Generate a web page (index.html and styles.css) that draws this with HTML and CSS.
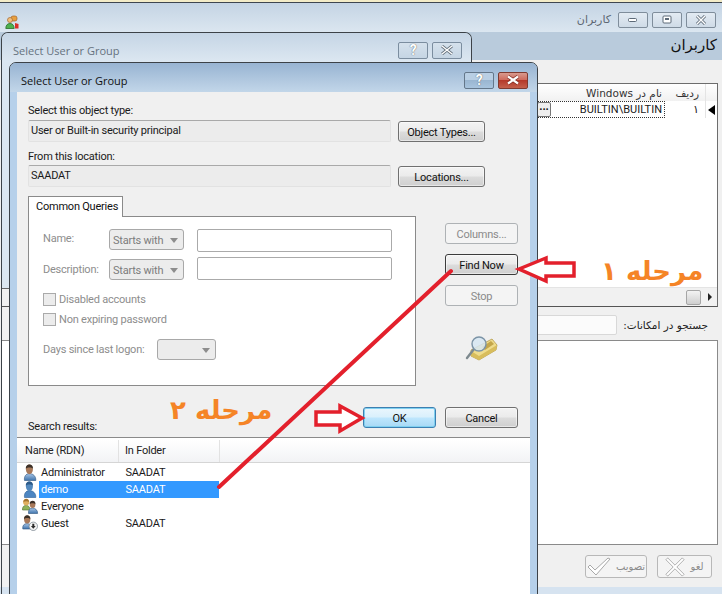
FILE: index.html
```html
<!DOCTYPE html>
<html lang="en">
<head>
    <meta charset="UTF-8">
    <meta name="viewport" content="width=device-width, initial-scale=1.0">
    <title>Select User or Group</title>
    <link rel="stylesheet" href="styles.css">
</head>
<body>
    <svg class="defs" width="0" height="0">
        <defs>
            <linearGradient id="body-blue" x1="0" y1="0" x2="0" y2="1">
                <stop offset="0" stop-color="#a9c6e6"/>
                <stop offset="1" stop-color="#3f74ad"/>
            </linearGradient>
            <symbol id="user" viewBox="0 0 16 17">
                <path d="M2.500 16.500c-.6-3.800 1.200-6.900 5-6.900s6.600 2.900 6.300 6.900z" fill="url(#body-blue)" stroke="#2f5580" stroke-width=".6"/>
                <ellipse cx="7.400" cy="5.400" rx="3.500" ry="4.800" fill="#a8795a"/>
                <path d="M3.800 4.800C3.700 1.500 5.500.4 7.500.4s3.600 1.200 3.500 4.400C9.600 3 5.300 3 3.800 4.800z" fill="#3c3028"/>
            </symbol>
            <symbol id="user-blue" viewBox="0 0 16 17">
                <path d="M2.500 16.500c-.6-3.800 1.200-6.900 5-6.900s6.600 2.900 6.300 6.900z" fill="#4d86c2" stroke="#2f5f94" stroke-width=".6"/>
                <ellipse cx="7.400" cy="5.400" rx="3.500" ry="4.800" fill="#5288bd"/>
                <path d="M3.800 4.800C3.700 1.500 5.500.4 7.500.4s3.600 1.200 3.500 4.400C9.600 3 5.300 3 3.800 4.800z" fill="#2d5a88"/>
            </symbol>
            <symbol id="users" viewBox="0 0 17 16">
                <path d="M.5 12c-.3-2.800 1-4.600 3.600-4.600S8 9.200 7.800 12z" fill="#8fb35a" stroke="#4d6b2a" stroke-width=".6"/>
                <circle cx="4.200" cy="4.300" r="3.100" fill="#e0b060"/>
                <path d="M1.300 4C1.500 1.700 2.800.7 4.300.7S7 1.800 7.100 4C5.600 2.900 3 2.900 1.300 4z" fill="#a5742f"/>
                <path d="M6.500 15.500c-.4-3.200 1.100-5.400 4-5.400s5.300 2.200 5.100 5.400z" fill="url(#body-blue)" stroke="#2f5580" stroke-width=".6"/>
                <ellipse cx="10.600" cy="6.600" rx="2.800" ry="3.500" fill="#a8795a"/>
                <path d="M7.700 6.200C7.600 3.700 9 2.800 10.600 2.800s2.900 1 2.800 3.400C12.300 4.900 8.900 4.900 7.700 6.200z" fill="#3c3028"/>
            </symbol>
            <symbol id="user-down" viewBox="0 0 16 16">
                <path d="M.8 14c-.5-3.200 1-5.400 4.200-5.400S10 10.800 9.800 14z" fill="url(#body-blue)" stroke="#2f5580" stroke-width=".6"/>
                <ellipse cx="5.200" cy="4.600" rx="3.100" ry="4" fill="#a8795a"/>
                <path d="M2 4.200C1.900 1.400 3.400.3 5.200.3s3.300 1.100 3.200 3.900C7 2.700 3.400 2.700 2 4.200z" fill="#3c3028"/>
                <circle cx="11.300" cy="11.300" r="4.200" fill="#f4f4f4" stroke="#6f7b86" stroke-width=".7"/>
                <path d="M10.300 8.700h2v2.300h1.400l-2.400 2.800-2.400-2.800h1.400z" fill="#2b2b2b"/>
            </symbol>
        </defs>
    </svg>

    <div class="stage">
        <!-- main window behind the dialogs -->
        <div class="app">
            <div class="app-top">
                <svg class="app-icon" width="15" height="15" viewBox="0 0 15 15">
                    <rect x="6" y="1" width="6" height="5" rx="2" fill="#e8a040" stroke="#a5652a" stroke-width=".7"/>
                    <circle cx="5" cy="5" r="2.500" fill="#f0c080" stroke="#a5652a" stroke-width=".7"/>
                    <path d="M.8 13.500c0-3.200 1.600-5 4.200-5s4 1.800 4.200 5z" fill="#4fb04f" stroke="#2a6f2a" stroke-width=".8"/>
                    <path d="M10 8l3.500 1v4.500H10z" fill="#d8302a"/>
                </svg>
                <div class="app-controls">
                    <span class="app-name">کاربران</span>
                    <span class="win-btn"><svg width="10" height="6" viewBox="0 0 10 6"><rect x=".5" y="1.500" width="8" height="3" rx="1" fill="#fff" stroke="#5d6a78"/></svg></span>
                    <span class="win-btn"><svg width="10" height="9" viewBox="0 0 10 9"><rect x="1" y="1" width="8" height="7" rx="1" fill="#fff" stroke="#5d6a78"/><rect x="3" y="3" width="4" height="2" fill="#5d6a78"/></svg></span>
                    <span class="win-btn"><svg width="12" height="10" viewBox="0 0 12 10"><path d="M2 1l8 8M10 1L2 9" stroke="#5d6a78" stroke-width="3"/><path d="M2 1l8 8M10 1L2 9" stroke="#fff" stroke-width="1.400"/></svg></span>
                </div>
            </div>
            <div class="app-head">کاربران</div>
            <div class="app-body">
                <div class="grid-box">
                    <div class="grid-head">
                        <span class="col-fill"></span>
                        <span class="col-name" dir="rtl">نام در Windows</span>
                        <span class="col-idx">ردیف</span>
                        <span class="col-mark"></span>
                    </div>
                    <div class="grid-row">
                        <span class="col-fill"></span>
                        <span class="col-name cell-edit"><b class="dots">•••</b>BUILTIN\BUILTIN</span>
                        <span class="col-idx">۱</span>
                        <span class="col-mark"><i class="row-arrow"></i></span>
                    </div>
                    <div class="grid-space"></div>
                    <div class="hscroll">
                        <span class="thumb"></span>
                        <i class="scroll-arrow"></i>
                    </div>
                </div>
                <div class="search-row">
                    <span class="search-input"></span>
                    <label>جستجو در امکانات:</label>
                </div>
                <div class="text-box"></div>
                <div class="app-actions">
                    <span class="act-btn">
                        <svg width="24" height="19" viewBox="0 0 24 19"><path d="M1 10l2-2 5 5L21 1l2 1L9 18z" fill="#fff" stroke="#a9a9a9"/></svg>
                        تصویب
                    </span>
                    <span class="act-btn act-cancel">
                        <svg width="20" height="20" viewBox="0 0 22 22"><path d="M3 1l8 8 8-8 2 2-8 8 8 8-2 2-8-8-8 8-2-2 8-8-8-8z" fill="#fff" stroke="#a9a9a9"/></svg>
                        لغو
                    </span>
                </div>
            </div>
            <div class="app-foot"></div>
        </div>

        <!-- dialog behind, lost focus -->
        <div class="window window-back">
            <div class="title-bar">
                <span class="title-text">Select User or Group</span>
                <span class="cap-btn cap-pale">?</span>
                <span class="cap-btn cap-pale"><svg width="14" height="10" viewBox="0 0 14 10"><path d="M2 1l10 8M12 1L2 9" stroke="#66727e" stroke-width="3"/><path d="M2 1l10 8M12 1L2 9" stroke="#fff" stroke-width="1.300"/></svg></span>
            </div>
        </div>

        <!-- dialog in front -->
        <div class="window window-front">
            <div class="title-bar">
                <span class="title-text">Select User or Group</span>
                <span class="cap-btn">?</span>
                <span class="cap-btn cap-close"><svg width="16" height="10" viewBox="0 0 16 10"><path d="M3 1.500l10 7M13 1.500l-10 7" stroke="#7d2a20" stroke-width="3.600"/><path d="M3 1.500l10 7M13 1.500l-10 7" stroke="#fff" stroke-width="2.200"/></svg></span>
            </div>
            <div class="dialog-body">
                <div class="form-area">
                    <div class="field-label">Select this object type:</div>
                    <div class="field-row">
                        <div class="read-field">User or Built-in security principal</div>
                        <button class="btn" type="button">Object Types...</button>
                    </div>
                    <div class="field-label field-label-2">From this location:</div>
                    <div class="field-row">
                        <div class="read-field">SAADAT</div>
                        <button class="btn" type="button">Locations...</button>
                    </div>

                    <div class="query-area">
                        <div class="query-left">
                            <div class="tab">Common Queries</div>
                            <div class="tab-panel">
                                <div class="query-row">
                                    <span class="query-label">Name:</span>
                                    <span class="combo">Starts with<i class="combo-arrow"></i></span>
                                    <span class="text-input"></span>
                                </div>
                                <div class="query-row query-row-2">
                                    <span class="query-label">Description:</span>
                                    <span class="combo">Starts with<i class="combo-arrow"></i></span>
                                    <span class="text-input"></span>
                                </div>
                                <div class="check-row check-first"><i class="check"></i>Disabled accounts</div>
                                <div class="check-row"><i class="check"></i>Non expiring password</div>
                                <div class="days-row">
                                    <span class="days-label">Days since last logon:</span>
                                    <span class="combo combo-small"><i class="combo-arrow"></i></span>
                                </div>
                            </div>
                        </div>
                        <div class="query-side">
                            <button class="btn btn-off" type="button">Columns...</button>
                            <button class="btn btn-find" type="button">Find Now</button>
                            <button class="btn btn-off" type="button">Stop</button>
                            <svg class="find-icon" width="33" height="25" viewBox="0 0 33 25">
                                <path d="M6 14L27 3l5 6-1 5-17 10-8-4z" fill="#efdc8c" stroke="#b49a4a" stroke-width=".8"/>
                                <path d="M6 15l8 5 18-11-1 5-17 10-8-4z" fill="#d8bd5c"/>
                                <path d="M17 11l9-6 3 3-9 6z" fill="#c4a64a"/>
                                <path d="M9 13L2 22" stroke="#7e8a8f" stroke-width="2.400" stroke-linecap="round"/>
                                <circle cx="14" cy="8" r="7" fill="#d6e6f2" fill-opacity=".85" stroke="#7b93a6" stroke-width="1.400"/>
                            </svg>
                        </div>
                    </div>

                    <div class="result-bar">
                        <span class="field-label">Search results:</span>
                        <div class="result-btns">
                            <button class="btn btn-ok" type="button">OK</button>
                            <button class="btn" type="button">Cancel</button>
                        </div>
                    </div>
                </div>

                <div class="list">
                    <div class="list-head">
                        <span class="list-col1">Name (RDN)</span>
                        <span class="list-col2">In Folder</span>
                    </div>
                    <div class="list-row">
                        <svg class="list-icon" width="16" height="17"><use href="#user"/></svg>
                        <span class="list-col1">Administrator</span>
                        <span class="list-col2">SAADAT</span>
                    </div>
                    <div class="list-row list-row-on">
                        <svg class="list-icon" width="16" height="17"><use href="#user-blue"/></svg>
                        <span class="list-col1">demo</span>
                        <span class="list-col2">SAADAT</span>
                    </div>
                    <div class="list-row">
                        <svg class="list-icon" width="17" height="16"><use href="#users"/></svg>
                        <span class="list-col1">Everyone</span>
                        <span class="list-col2"></span>
                    </div>
                    <div class="list-row">
                        <svg class="list-icon" width="16" height="16"><use href="#user-down"/></svg>
                        <span class="list-col1">Guest</span>
                        <span class="list-col2">SAADAT</span>
                    </div>
                </div>
            </div>
        </div>

        <!-- annotations drawn on top of the screenshot -->
        <svg class="marks" width="722" height="594" viewBox="0 0 722 594">
            <path d="M219 487L451 271" fill="none" stroke="#e3202c" stroke-width="4" stroke-linecap="round"/>
            <path d="M519 269L546 258V263H574V276H546V281z" fill="#fff" stroke="#e3202c" stroke-width="3.500"/>
            <path d="M362 418L340 406V412H316V425H340V431z" fill="#fff" stroke="#e3202c" stroke-width="3.500"/>
        </svg>
        <div class="step step-1">مرحله ۱</div>
        <div class="step step-2">مرحله ۲</div>
    </div>
</body>
</html>
```

FILE: styles.css
```css
html, body {
    margin: 0;
    padding: 0;
    overflow: hidden;
}

body {
    font-family: Roboto, "Liberation Sans", sans-serif;
    font-size: 11px;
    letter-spacing: -0.22px;
    color: #1a1a1a;
}

.defs {
    position: absolute;
}

.stage {
    position: relative;
    width: 722px;
    height: 594px;
    overflow: hidden;
    background: #f0f0f0;
}

/* main window */
.app {
    width: 722px;
    height: 594px;
    display: flex;
    flex-direction: column;
    border-top: 3px solid #3e4650;
    box-sizing: border-box;
    position: relative;
}

.app::before {
    content: "";
    position: absolute;
    left: 0;
    right: 0;
    top: -3px;
    height: 2px;
    background: #f3ecc8;
}

.app-top {
    height: 29px;
    display: flex;
    align-items: center;
    justify-content: space-between;
    padding: 0 6px 0 5px;
    background: linear-gradient(#c4d4e4, #dbe6f0);
}

.app-icon {
    margin-top: 10px;
}

.app-controls {
    display: flex;
    align-items: center;
    gap: 4px;
    margin-top: 4px;
}

.app-name {
    font-family: "DejaVu Sans", sans-serif;
    font-size: 11px;
    letter-spacing: 0;
    color: #5c6672;
    margin-right: 3px;
}

.win-btn {
    width: 30px;
    height: 16px;
    box-sizing: border-box;
    border: 1px solid #7f8d9b;
    border-radius: 2px;
    background: linear-gradient(#e3ebf3, #cfdbe7);
    display: flex;
    align-items: center;
    justify-content: center;
}

.app-head {
    height: 28px;
    background: #b9cbdc;
    direction: rtl;
    font-family: "DejaVu Sans", sans-serif;
    font-size: 15px;
    letter-spacing: 0;
    line-height: 26px;
    padding-right: 5px;
    color: #111;
}

.app-body {
    height: 527px;
    flex: 1;
    display: flex;
    flex-direction: column;
    padding: 23px 4px 0 1px;
    background: #f0f0f0;
}

.grid-box {
    height: 224px;
    border: 1px solid #6d6d6d;
    border-bottom-color: #555;
    background: #fff;
    display: flex;
    flex-direction: column;
    box-sizing: border-box;
}

.grid-head,
.grid-row {
    display: flex;
    height: 17px;
    font-family: "DejaVu Sans", sans-serif;
    font-size: 10.500px;
    letter-spacing: 0;
    line-height: 17px;
}

.grid-head {
    background: linear-gradient(#fff, #f1f1f1);
    color: #333;
    line-height: 19px;
}

.grid-row {
    font-family: Roboto, sans-serif;
    font-size: 11px;
}

.col-fill {
    flex: 1;
}

.col-name {
    width: 135px;
    box-sizing: border-box;
    text-align: right;
    padding-right: 3px;
    border-right: 1px solid #e4e4e4;
    position: relative;
}

.col-name[dir="rtl"] {
    padding-right: 3px;
    border-right: 0;
    border-left: 1px solid #e4e4e4;
}

.col-idx {
    width: 41px;
    box-sizing: border-box;
    text-align: right;
    padding-right: 6px;
    border-right: 1px solid #e4e4e4;
}

.col-mark {
    width: 11px;
    display: flex;
    align-items: center;
    justify-content: center;
}

.cell-edit {
    border: 1px dotted #333;
    line-height: 15px;
    padding-right: 2px;
}

.dots {
    position: absolute;
    left: 6px;
    top: 0;
    width: 14px;
    height: 15px;
    border: 1px solid #777;
    border-radius: 2px;
    box-sizing: border-box;
    background: #eee;
    font-family: "DejaVu Sans", sans-serif;
    font-size: 5px;
    line-height: 12px;
    text-align: center;
    font-weight: bold;
    letter-spacing: 0;
    color: #111;
}

.row-arrow {
    border: 5px solid transparent;
    border-right: 7px solid #000;
    border-left: 0;
}

.grid-space {
    flex: 1;
}

.hscroll {
    height: 18px;
    background: #f1f1f1;
    border-top: 1px solid #e4e4e4;
    display: flex;
    align-items: center;
    justify-content: flex-end;
    padding-right: 5px;
    gap: 7px;
}

.thumb {
    width: 13px;
    height: 13px;
    border: 1px solid #a6a6a6;
    border-radius: 2px;
    background: linear-gradient(#f3f3f3, #cfcfcf);
}

.scroll-arrow {
    border: 4px solid transparent;
    border-left: 4px solid #222;
    border-right: 0;
}

.search-row {
    height: 33px;
    display: flex;
    justify-content: flex-end;
    align-items: center;
}

.search-input {
    width: 128px;
    height: 18px;
    background: #fbfbfb;
    border: 1px solid #d8d8d8;
    margin-right: 5px;
    margin-top: 2px;
    border-radius: 2px;
}

.search-row label {
    font-family: "DejaVu Sans", sans-serif;
    font-size: 10.500px;
    letter-spacing: 0;
    width: 96px;
    direction: rtl;
    padding: 2px 10px 0 0;
    box-sizing: border-box;
    white-space: nowrap;
    color: #222;
}

.text-box {
    height: 205px;
    border: 1px solid #8a8a8a;
    background: #fff;
    box-sizing: border-box;
}

.app-actions {
    display: flex;
    justify-content: flex-end;
    gap: 10px;
    padding: 10px 6px 0 0;
}

.act-btn {
    width: 62px;
    height: 23px;
    border: 1px solid #b8b8b8;
    border-radius: 3px;
    box-sizing: border-box;
    display: flex;
    align-items: center;
    justify-content: center;
    gap: 5px;
    font-family: "DejaVu Sans", sans-serif;
    font-size: 10px;
    letter-spacing: 0;
    color: #8b8b8b;
    background: #f4f4f4;
}

.act-cancel {
    width: 55px;
}

.app-foot {
    height: 7px;
    background: #d6e3f0;
}

/* dialog windows */
.window {
    position: absolute;
    box-sizing: border-box;
    border: 1px solid #3c4248;
    border-radius: 7px 7px 0 0;
}

.window-back {
    left: 1px;
    top: 32px;
    width: 471px;
    height: 600px;
    border-bottom: 0;
    /* tint stops where the grid's scroll bar shows through on the left */
    background: linear-gradient(#dbe6f0 0, #dbe6f0 255px, #666 255px, #666 256px, transparent 256px);
}

.window-back .title-bar {
    background: linear-gradient(#c5d5e5, #dce7f1);
    border-radius: 6px 6px 0 0;
    color: #66727e;
}

.window-front {
    left: 9px;
    top: 62px;
    width: 529px;
    height: 540px;
    background: #b6d0ea;
    display: flex;
    flex-direction: column;
}

.window-front .title-bar {
    background: linear-gradient(#98b4d2, #c2d6e9);
    border-radius: 6px 6px 0 0;
    color: #111;
}

.title-bar {
    height: 29px;
    display: flex;
    align-items: center;
    padding: 5px 9px 0 11px;
    gap: 4px;
    box-sizing: border-box;
}

.title-text {
    font-family: "Open Sans", sans-serif;
    font-size: 11px;
    letter-spacing: 0;
    flex: 1;
}

.cap-btn {
    width: 30px;
    height: 17px;
    box-sizing: border-box;
    border: 1px solid #64778a;
    border-radius: 2px;
    display: flex;
    align-items: center;
    justify-content: center;
    background: linear-gradient(#b9cfe4 0, #b9cfe4 45%, #9ab6d1 50%, #a8c4de 100%);
    color: #fff;
    font-weight: bold;
    font-size: 14px;
    text-shadow: 0 0 1px #333;
}

.cap-pale {
    background: linear-gradient(#d5e1ec, #c5d5e4);
    border-color: #7b8d9f;
}

.cap-close {
    border-color: #7f3a30;
    background: linear-gradient(#d89a8e 0, #cf6b5d 45%, #b5392a 50%, #c4604c 100%);
}

.dialog-body {
    flex: 1;
    margin: 0 7px;
    background: #f0f0f0;
}

.form-area {
    padding: 11px 12px 0 11px;
    height: 345px;
    box-sizing: border-box;
}

.field-label {
    line-height: 16px;
    height: 14px;
}

.field-label-2 {
    margin-top: 7px;
}

.field-row {
    display: flex;
    align-items: flex-end;
    gap: 7px;
    margin-top: 3px;
}

.field-label-2 + .field-row {
    margin-top: 2px;
}

.read-field {
    width: 363px;
    height: 22px;
    box-sizing: border-box;
    background: #ececec;
    border: 1px solid #e2e2e2;
    border-top-color: #a9a9a9;
    border-radius: 2px;
    padding-left: 2px;
    line-height: 20px;
}

.btn {
    font-family: Roboto, sans-serif;
    font-size: 11px;
    letter-spacing: -0.22px;
    color: #111;
    width: 87px;
    height: 21px;
    padding: 1px 0 0;
    border: 1px solid #707070;
    border-radius: 3px;
    background: linear-gradient(#f3f3f3 0, #ebebeb 48%, #dcdcdc 52%, #cfcfcf 100%);
    box-shadow: inset 0 0 0 1px rgba(255, 255, 255, 0.5);
}

.query-area {
    display: flex;
    gap: 29px;
    margin-top: 9px;
}

.query-left {
    width: 388px;
}

.tab {
    width: 95px;
    height: 21px;
    box-sizing: border-box;
    border: 1px solid #8a8a8a;
    border-bottom: 0;
    background: #fff;
    line-height: 19px;
    padding-left: 7px;
    white-space: nowrap;
    position: relative;
    z-index: 1;
    margin-bottom: -1px;
    color: #111;
}

.tab-panel {
    height: 170px;
    box-sizing: border-box;
    border: 1px solid #8a8a8a;
    background: #fff;
    padding: 12px 0 0 14px;
    color: #8d8d8d;
}

.query-row {
    display: flex;
    align-items: flex-start;
    height: 23px;
}

.query-row-2 {
    margin-top: 5px;
}

.query-label {
    width: 66px;
    line-height: 20px;
}

.query-row-2 .query-label {
    line-height: 26px;
}

.combo {
    width: 75px;
    height: 21px;
    box-sizing: border-box;
    border: 1px solid #a8a8a8;
    border-radius: 3px;
    background: #ececec;
    line-height: 22px;
    padding-left: 3px;
    margin-right: 13px;
    position: relative;
    color: #7c7c7c;
}

.query-row-2 .combo {
    margin-top: 2px;
}

.combo-arrow {
    position: absolute;
    right: 5px;
    top: 8px;
    border: 4px solid transparent;
    border-top: 5px solid #8d8d8d;
    border-bottom: 0;
}

.combo-small {
    width: 59px;
    margin: 0;
}

.text-input {
    width: 195px;
    height: 23px;
    box-sizing: border-box;
    border: 1px solid #aaa;
    border-radius: 2px;
    background: #fff;
}

.check-row {
    display: flex;
    align-items: center;
    height: 14px;
    margin-top: 6px;
}

.check-first {
    margin-top: 12px;
}

.check {
    width: 13px;
    height: 13px;
    box-sizing: border-box;
    border: 1px solid #aaa;
    background: #ececec;
    margin-right: 3px;
}

.days-row {
    display: flex;
    align-items: center;
    margin-top: 13px;
}

.days-label {
    width: 114px;
}

.query-side {
    width: 73px;
    display: flex;
    flex-direction: column;
    align-items: center;
    gap: 10px;
    padding-top: 27px;
}

.query-side .btn {
    width: 73px;
}

.btn-off {
    color: #8a8a8a;
    background: #f4f4f4;
    border-color: #aeb2b5;
    box-shadow: none;
}

.btn-find {
    border-color: #3c3c3c;
}

.find-icon {
    margin-top: 20px;
}

.result-bar {
    display: flex;
    justify-content: space-between;
    align-items: flex-end;
    height: 30px;
    margin-top: 21px;
    padding-bottom: 3px;
    box-sizing: border-box;
}

.result-bar .field-label {
    line-height: 14px;
}

.result-btns {
    display: flex;
    gap: 9px;
    align-self: flex-start;
}

.result-btns .btn {
    width: 73px;
}

.btn-ok {
    border-color: #3c7fb1;
    background: linear-gradient(#eaf6fd 0, #d9f0fc 48%, #bee6fd 52%, #a7d9f5 100%);
    box-shadow: inset 0 0 0 1px #7fd0f0;
}

.list {
    height: 157px;
    background: #fff;
    border-top: 1px solid #8a8a8a;
    padding-top: 2px;
}

.list-head {
    height: 22px;
    display: flex;
    align-items: center;
    background: linear-gradient(#fff, #f2f3f5);
    border-bottom: 1px solid #d5d5d5;
    padding-left: 8px;
    color: #222;
}

.list-head .list-col1 {
    width: 93px;
    height: 100%;
    line-height: 22px;
    border-right: 1px solid #e2e2e2;
}

.list-head .list-col2 {
    width: 101px;
    height: 100%;
    line-height: 22px;
    padding-left: 6px;
    box-sizing: border-box;
    border-right: 1px solid #e2e2e2;
}

.list-row {
    height: 17px;
    position: relative;
    display: flex;
    align-items: center;
    margin-left: 22px;
    width: 180px;
    line-height: 17px;
}

.list-head + .list-row {
    margin-top: 1px;
}

.list-row .list-col1 {
    width: 85px;
    padding-left: 2px;
}

.list-row .list-col2 {
    width: 94px;
}

.list-row-on {
    background: #3399ff;
    color: #fff;
}

.list-icon {
    position: absolute;
    left: -17px;
    top: 0;
}

/* annotations */
.marks {
    position: absolute;
    left: 0;
    top: 0;
}

.step {
    position: absolute;
    font-family: "DejaVu Sans", sans-serif;
    font-size: 26px;
    font-weight: bold;
    letter-spacing: 0;
    color: #f58426;
    direction: rtl;
    white-space: nowrap;
    line-height: 34px;
}

.step-1 {
    left: 601px;
    top: 254px;
}

.step-2 {
    left: 170px;
    top: 393px;
}
```
